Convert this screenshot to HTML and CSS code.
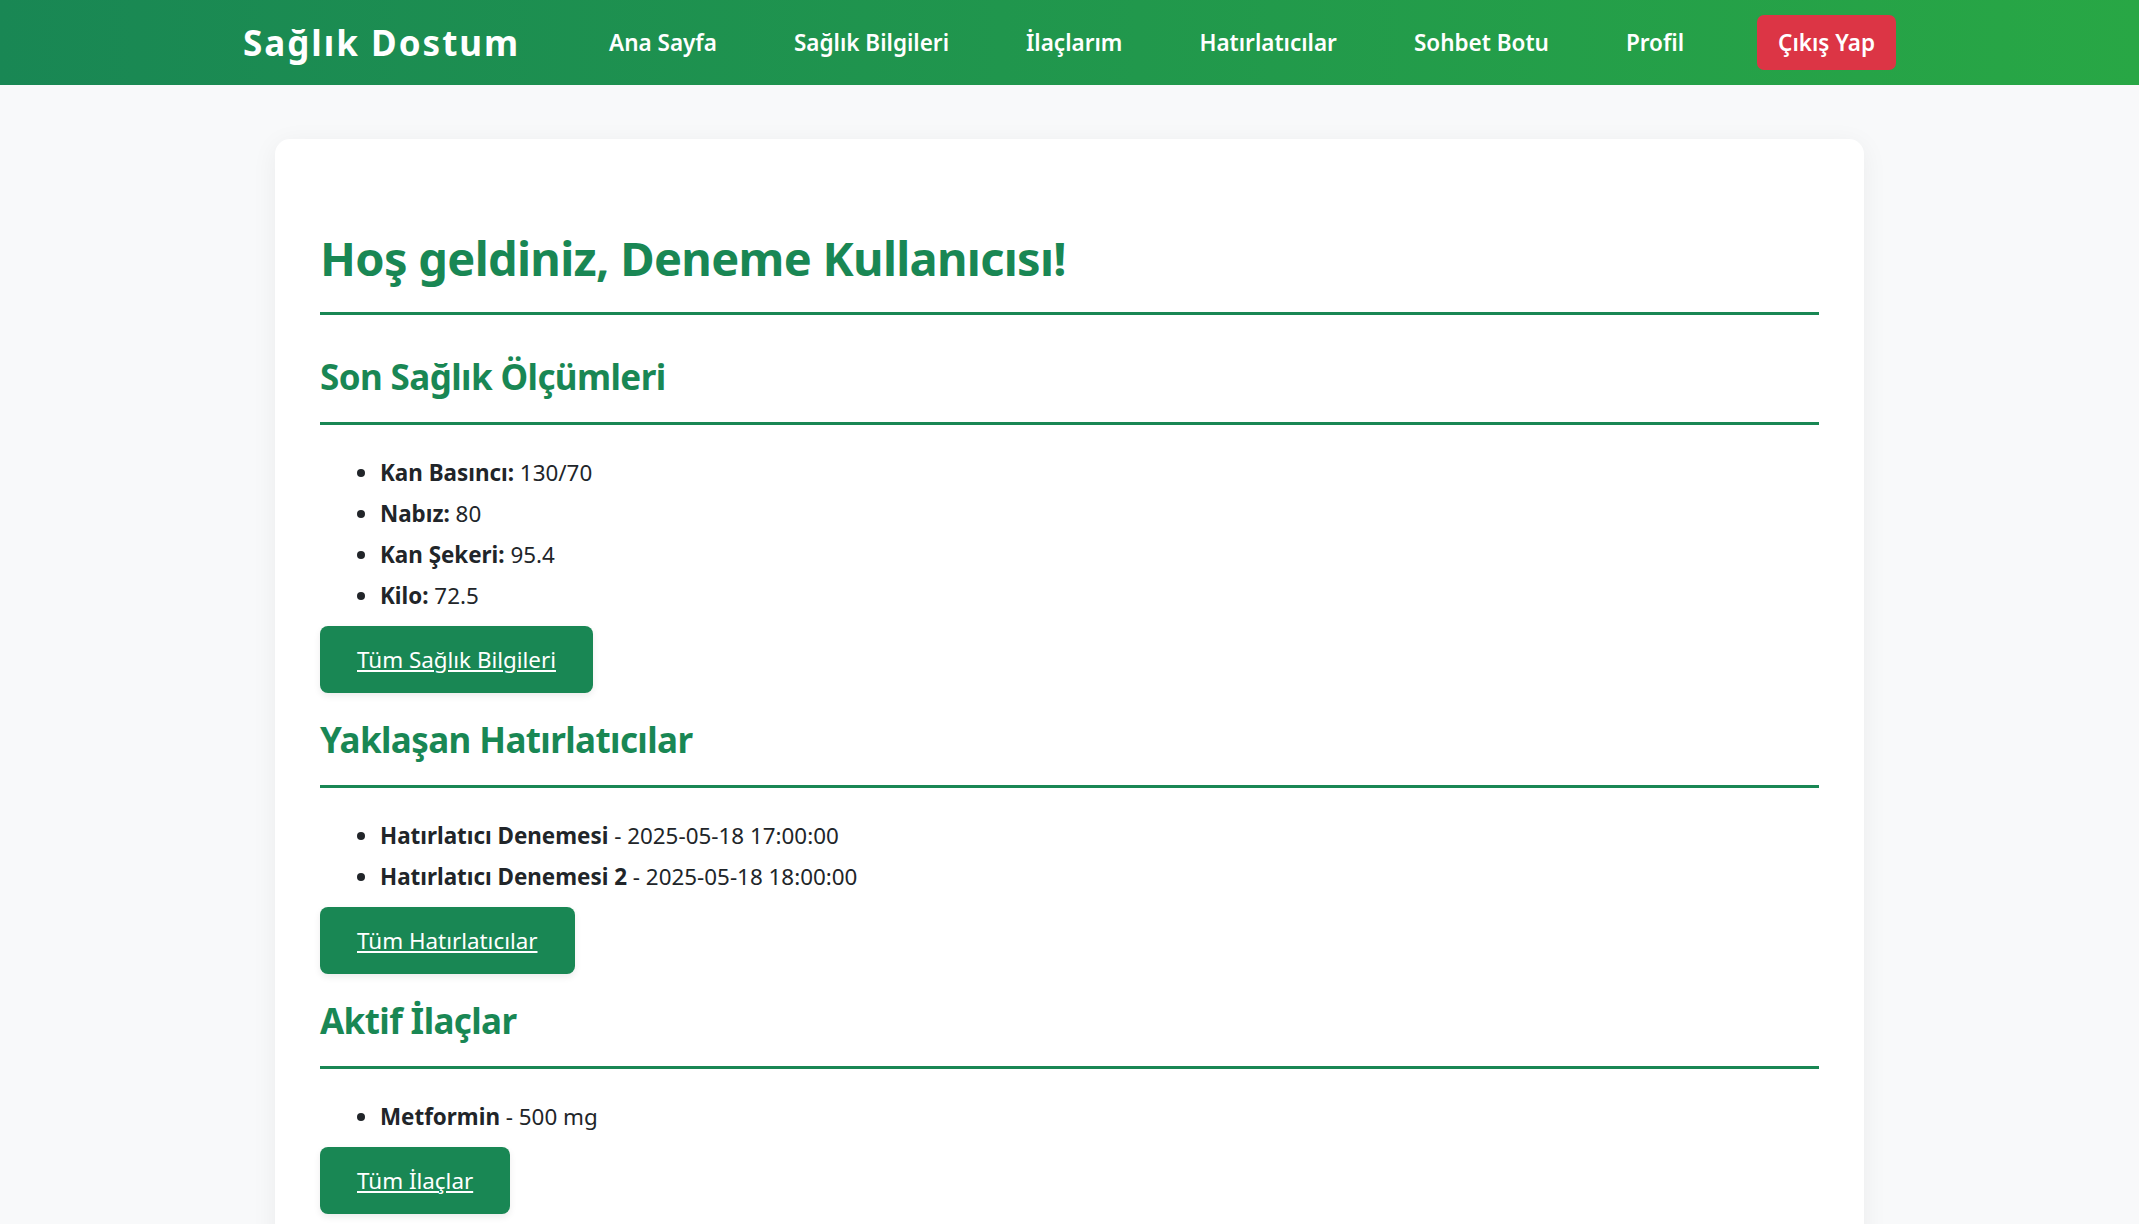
FILE: index.html
```html
<!DOCTYPE html>
<html lang="tr">
<head>
<meta charset="utf-8">
<title>Sağlık Dostum</title>
<link rel="stylesheet" href="styles.css">
</head>
<body>
<nav class="navbar">
  <div class="nav-inner">
    <a class="brand" href="#">Sağlık Dostum</a>
    <div class="nav-links">
      <a class="nav-link" href="#">Ana Sayfa</a>
      <a class="nav-link" href="#">Sağlık Bilgileri</a>
      <a class="nav-link" href="#">İlaçlarım</a>
      <a class="nav-link" href="#">Hatırlatıcılar</a>
      <a class="nav-link" href="#">Sohbet Botu</a>
      <a class="nav-link" href="#">Profil</a>
      <a class="nav-logout" href="#">Çıkış Yap</a>
    </div>
  </div>
</nav>

<main class="container">
  <div class="card">
    <h1 class="page-title">Hoş geldiniz, Deneme Kullanıcısı!</h1>

    <section class="section">
      <h2 class="section-title">Son Sağlık Ölçümleri</h2>
      <ul class="data-list">
        <li><strong>Kan Basıncı:</strong> 130/70</li>
        <li><strong>Nabız:</strong> 80</li>
        <li><strong>Kan Şekeri:</strong> 95.4</li>
        <li><strong>Kilo:</strong> 72.5</li>
      </ul>
      <div class="actions"><a class="btn" href="#">Tüm Sağlık Bilgileri</a></div>
    </section>

    <section class="section">
      <h2 class="section-title">Yaklaşan Hatırlatıcılar</h2>
      <ul class="data-list">
        <li><strong>Hatırlatıcı Denemesi</strong> - 2025-05-18 17:00:00</li>
        <li><strong>Hatırlatıcı Denemesi 2</strong> - 2025-05-18 18:00:00</li>
      </ul>
      <div class="actions"><a class="btn" href="#">Tüm Hatırlatıcılar</a></div>
    </section>

    <section class="section">
      <h2 class="section-title">Aktif İlaçlar</h2>
      <ul class="data-list">
        <li><strong>Metformin</strong> - 500 mg</li>
      </ul>
      <div class="actions"><a class="btn" href="#">Tüm İlaçlar</a></div>
    </section>
  </div>
</main>
</body>
</html>
```
FILE: styles.css
```css
* {
  box-sizing: border-box;
}

body {
  margin: 0;
  background: #f8f9fa;
  color: #212529;
  font-family: "Noto Sans", "Open Sans", sans-serif;
  font-size: 22.4px;
  line-height: 35px;
}

/* ---------- Navbar ---------- */
.navbar {
  height: 85px;
  background: linear-gradient(90deg, #198754 0%, #28a745 100%);
}

.nav-inner {
  max-width: 1653px;
  height: 100%;
  margin: 0 auto;
  display: flex;
  align-items: center;
  justify-content: space-between;
}

.brand {
  color: #ffffff;
  text-decoration: none;
  font-size: 35px;
  font-weight: 700;
  letter-spacing: 2px;
  line-height: 44px;
}

.nav-links {
  display: flex;
  align-items: center;
  gap: 37px;
}

.nav-link {
  color: #ffffff;
  text-decoration: none;
  font-size: 22.5px;
  font-weight: 600;
  line-height: 33px;
  padding: 10px 20px;
}

.nav-logout {
  margin-left: 16px;
  color: #ffffff;
  text-decoration: none;
  font-size: 22.5px;
  font-weight: 600;
  line-height: 33px;
  padding: 11px 21px;
  background: #dc3545;
  border-radius: 7px;
}

/* ---------- Content ---------- */
.container {
  max-width: 1589px;
  margin: 54px auto;
}

.card {
  background: #ffffff;
  border-radius: 15px;
  box-shadow: 0 5px 27px rgba(0, 0, 0, 0.06);
  padding: 45px;
}

.page-title {
  margin: 46px 0 41px;
  padding-bottom: 26px;
  border-bottom: 3px solid #198754;
  color: #198754;
  font-size: 47px;
  font-weight: 700;
  line-height: 56px;
  letter-spacing: -0.7px;
}

.section-title {
  margin: 26px 0 0;
  padding-bottom: 24px;
  border-bottom: 3px solid #198754;
  color: #198754;
  font-size: 35px;
  font-weight: 700;
  line-height: 42px;
  letter-spacing: -0.6px;
}

.data-list {
  margin: 30px 0 13px;
  padding-left: 60px;
}

.data-list li {
  margin-bottom: 6px;
}

.data-list strong {
  font-weight: 700;
}

.actions {
  display: flex;
}

.btn {
  display: inline-block;
  background: #198754;
  color: #ffffff;
  text-decoration: underline;
  padding: 16px 37px;
  border-radius: 8px;
  box-shadow: 0 3px 7px rgba(0, 0, 0, 0.08);
}
```
